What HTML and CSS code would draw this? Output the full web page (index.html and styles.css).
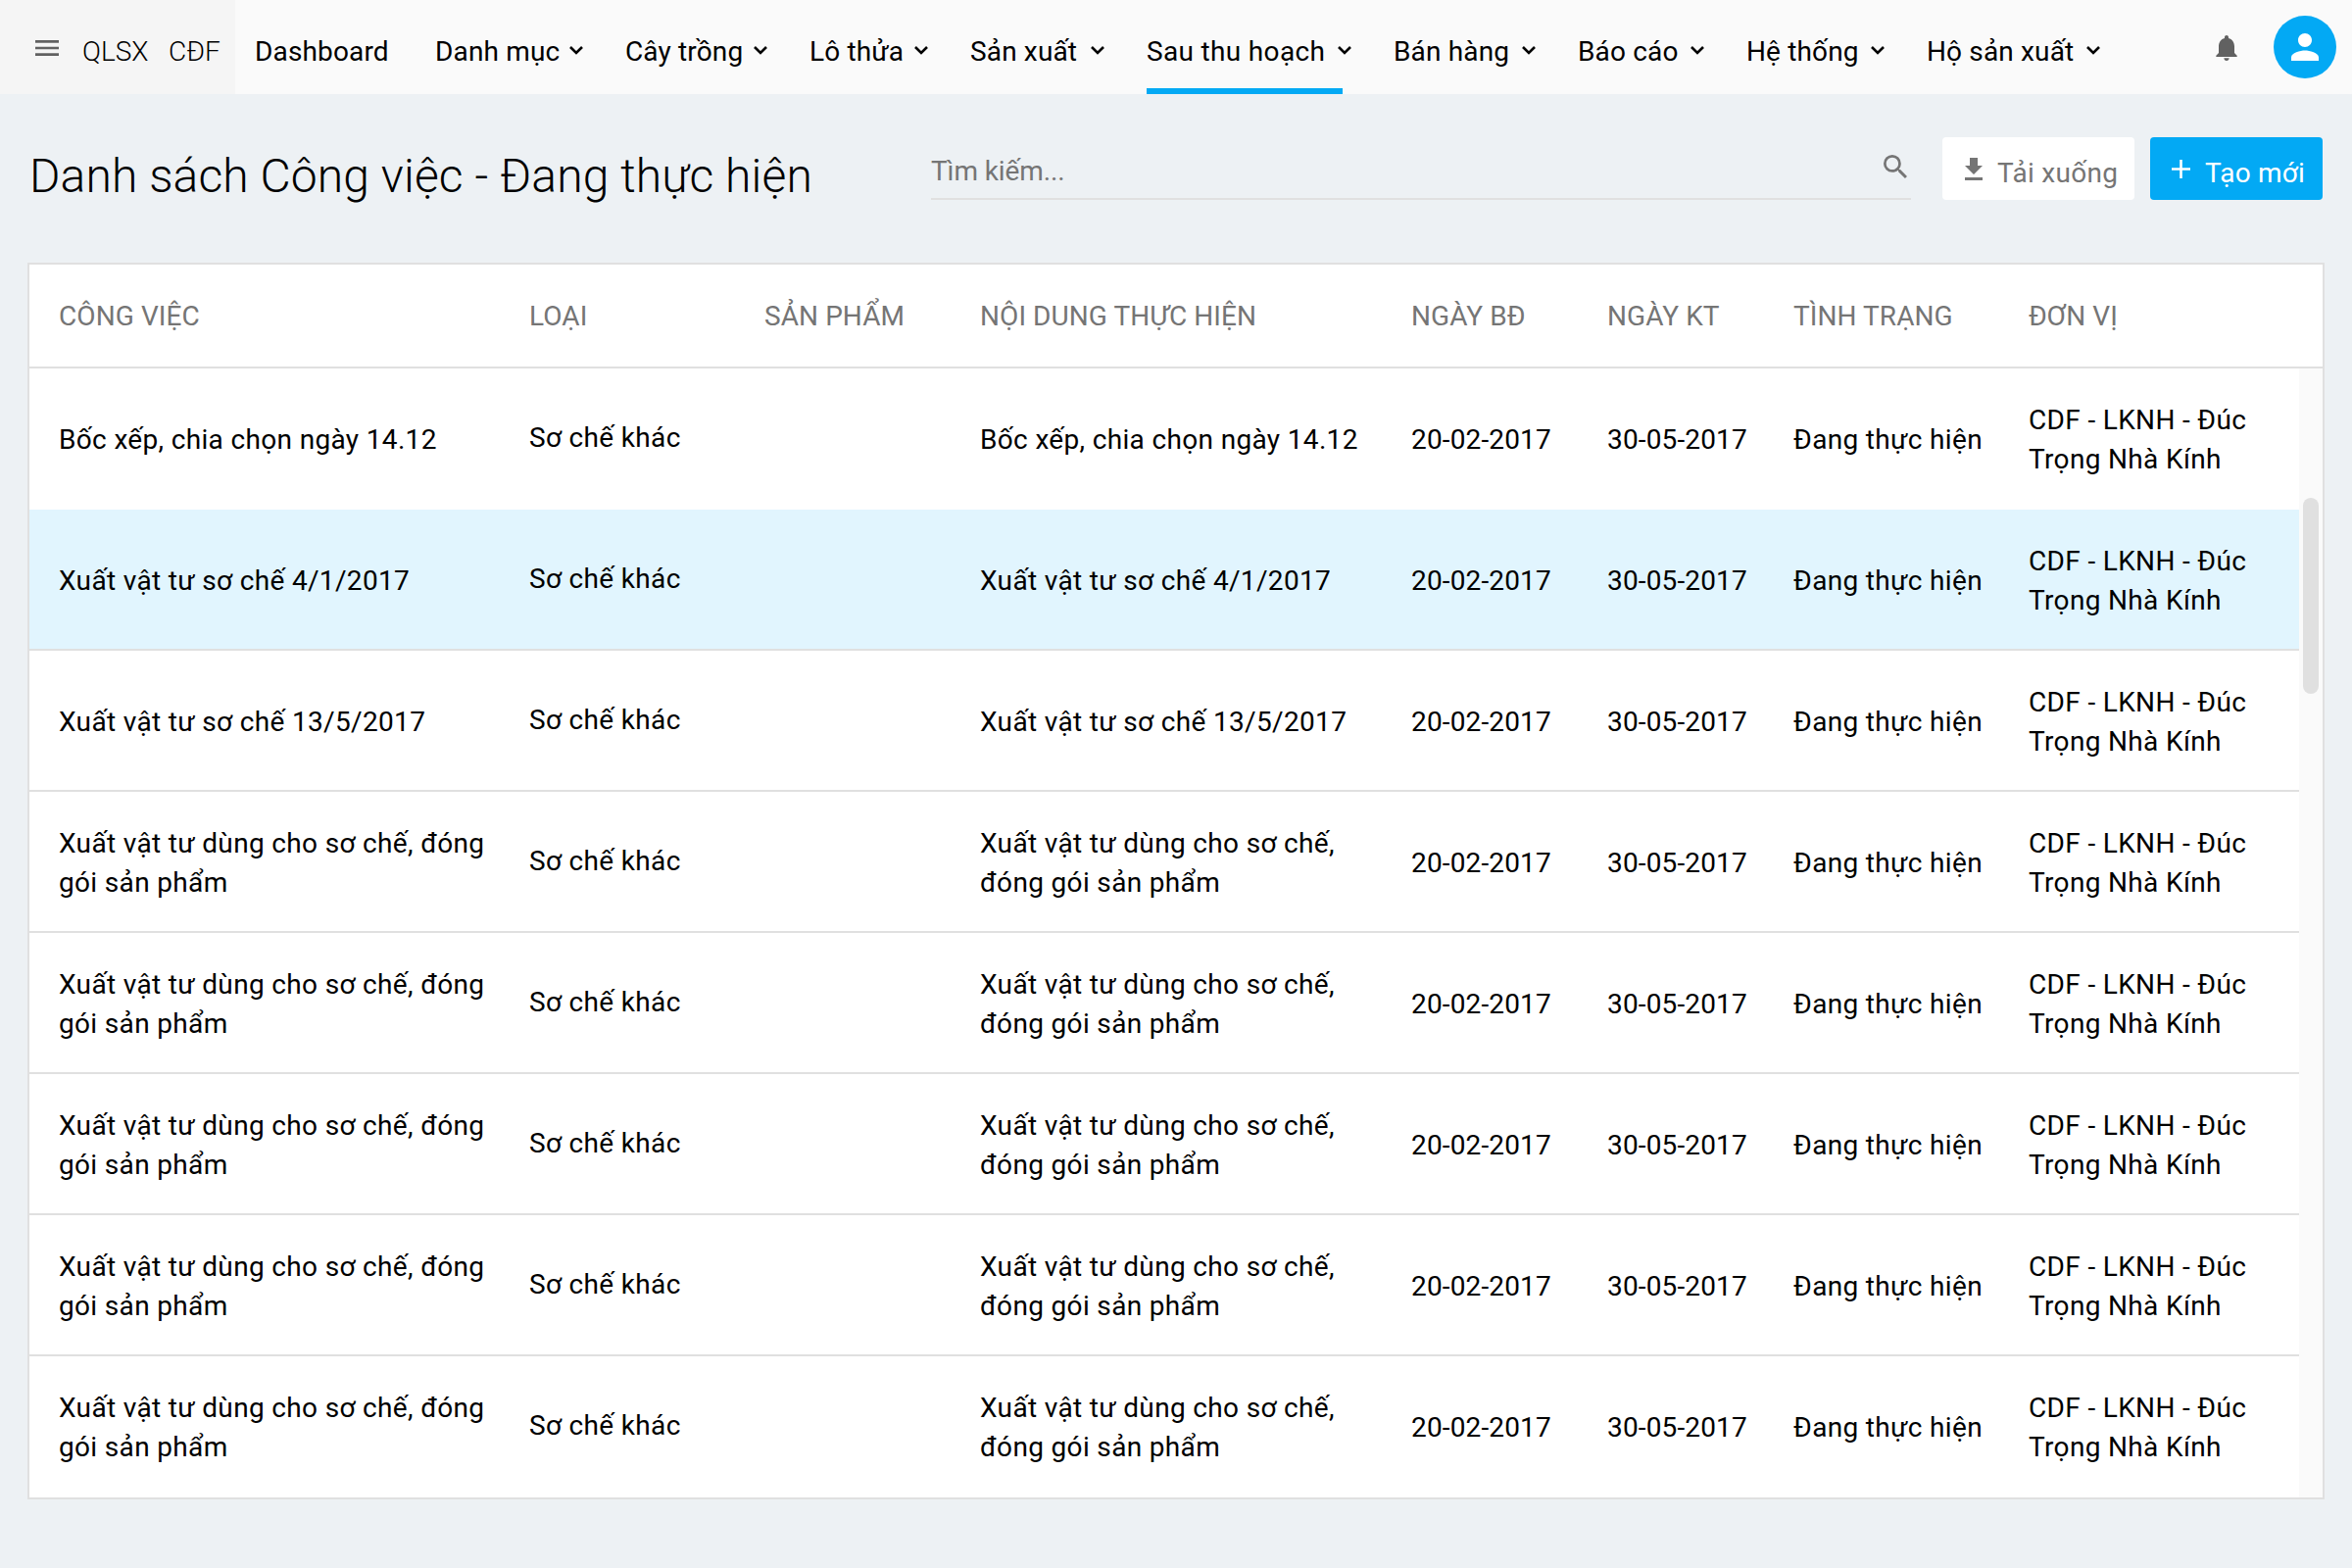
FILE: index.html
```html
<!DOCTYPE html>
<html lang="vi">
<head>
<meta charset="utf-8">
<title>Danh sách Công việc</title>
<link rel="stylesheet" href="styles.css">
</head>
<body>
<header class="navbar">
  <div class="brand">
    <svg class="brand-menu" viewBox="3 6 18 12"><path d="M3 18h18v-2H3v2zm0-5h18v-2H3v2zm0-7v2h18V6H3z"/></svg>
    <span class="brand-name">QLSX</span><span class="brand-org">CĐF</span>
  </div>
  <nav class="menu" id="menu"></nav>
  <div class="account">
    <svg class="bell" viewBox="4 2.5 16 19.5"><path d="M12 22c1.1 0 2-.9 2-2h-4c0 1.1.89 2 2 2zm6-6v-5c0-3.07-1.64-5.64-4.5-6.32V4c0-.83-.67-1.5-1.5-1.5s-1.5.67-1.5 1.5v.68C7.63 5.36 6 7.92 6 11v5l-2 2v1h16v-1l-2-2z"/></svg>
    <div class="avatar"><svg viewBox="4 4 16 16"><path d="M12 12c2.21 0 4-1.79 4-4s-1.790-4-4-4-4 1.790-4 4 1.790 4 4 4zm0 2c-2.670 0-8 1.340-8 4v2h16v-2c0-2.660-5.330-4-8-4z"/></svg></div>
  </div>
</header>
<main class="page">
  <div class="toolbar">
    <h1 class="title">Danh sách Công việc - Đang thực hiện</h1>
    <div class="search">
      <span class="search-hint">Tìm kiếm...</span>
      <svg class="search-icon" viewBox="3 3 17.500 17.500"><path d="M15.500 14h-.790l-.280-.270A6.471 6.471 0 0 0 16 9.500 6.500 6.500 0 1 0 9.500 16c1.610 0 3.090-.590 4.230-1.570l.270.280v.790l5 4.990L20.490 19l-4.990-5zm-6 0C7.010 14 5 11.990 5 9.500S7.010 5 9.500 5 14 7.010 14 9.500 11.990 14 9.500 14z"/></svg>
    </div>
    <div class="button button-plain">
      <svg class="icon-download" viewBox="0 0 18 23"><path d="M5 0h8v8h5l-9 9-9-9h5zM0 20h18v3H0z"/></svg>
      <span>Tải xuống</span>
    </div>
    <div class="button button-primary">
      <svg class="icon-plus" viewBox="0 0 19 19"><path d="M8.200 0h2.600v8.200H19v2.600h-8.200V19H8.200v-8.200H0V8.200h8.200z"/></svg>
      <span>Tạo mới</span>
    </div>
  </div>
  <section class="table">
    <div class="row head">
      <span>CÔNG VIỆC</span><span>LOẠI</span><span>SẢN PHẨM</span><span>NỘI DUNG THỰC HIỆN</span><span>NGÀY BĐ</span><span>NGÀY KT</span><span>TÌNH TRẠNG</span><span>ĐƠN VỊ</span>
    </div>
    <div class="body">
      <div class="rows" id="rows"></div>
      <div class="track"><div class="thumb"></div></div>
    </div>
  </section>
</main>
<script src="app.js"></script>
</body>
</html>
```

FILE: styles.css
```css
* { box-sizing: border-box; }
body {
  margin: 0;
  height: 1600px;
  background: #edf1f4;
  color: #000;
  font: 400 28px/40px Roboto, "Noto Sans", sans-serif;
  overflow: hidden;
}
svg { display: block; flex: none; }

.navbar { display: flex; height: 96px; background: #fafafa; }
.brand {
  display: flex;
  width: 240px;
  padding: 33px 0 0 36px;
  background: #f5f5f5;
  font-weight: 300;
}
.brand-menu { width: 24px; height: 16px; margin: 7.5px 24px 0 0; fill: #616161; }
.brand-name { width: 88px; }
.menu {
  display: grid;
  grid-template-columns: 184px 194px 188px 164px 180px 252px 188px 172px 184px 220px;
  margin-left: 20px;
  letter-spacing: 0.15px;
}
.menu-item {
  display: flex;
  justify-content: space-between;
  margin-right: 43px;
  padding-top: 33px;
  white-space: nowrap;
}
.menu-item.active { position: relative; letter-spacing: 0.33px; }
.menu-item.active::after {
  content: "";
  position: absolute;
  left: 0;
  bottom: 0;
  width: 200px;
  height: 6px;
  background: #03a9f4;
}
.chevron { width: 14px; height: 9px; margin-top: 14px; fill: none; stroke: #000; stroke-width: 2.6; }
.account { display: flex; margin-left: auto; padding-right: 16px; }
.bell { width: 22px; height: 26px; margin: 36px 37px 0 0; fill: #616161; }
.avatar {
  display: grid;
  place-items: center;
  width: 64px;
  height: 64px;
  margin-top: 16px;
  border-radius: 50%;
  background: #03a9f4;
}
.avatar svg { width: 28px; height: 28px; fill: #fff; }

.page { padding: 44px 28px 0; }
.toolbar { display: flex; height: 64px; padding-right: 2px; }
.title {
  width: 922px;
  margin: 8px 0 0;
  padding-left: 2px;
  font-size: 48px;
  font-weight: 300;
  line-height: 64px;
  letter-spacing: 0.1px;
}
.search {
  display: flex;
  justify-content: space-between;
  width: 1000px;
  margin-right: 32px;
  padding: 15px 4px 0 0;
  border-bottom: 2px solid #e0e0e0;
  color: #757575;
  letter-spacing: -0.1px;
}
.search-icon { width: 24px; height: 24px; margin-top: 3px; fill: #757575; }
.button {
  display: flex;
  padding: 17px 0 0;
  border-radius: 4px;
  white-space: nowrap;
}
.button-plain { width: 196px; margin-right: 16px; padding-left: 23px; background: #fff; color: #757575; letter-spacing: 0.3px; }
.button-primary { width: 176px; padding-left: 22px; background: #03a9f4; color: #fff; letter-spacing: 0.2px; }
.icon-download { width: 18px; height: 23px; margin: 4px 15px 0 0; fill: #757575; }
.icon-plus { width: 19px; height: 19px; margin: 6px 15px 0 0; fill: #fff; }

.table { margin-top: 64px; border: 2px solid #e0e0e0; background: #fff; }
.row {
  display: grid;
  grid-template-columns: 480px 240px 220px 440px 200px 190px 240px 1fr;
  align-items: center;
  height: 144px;
}
.row > span { padding: 2px 10px 0 30px; }
.row.head {
  height: 106px;
  border-bottom: 2px solid #e0e0e0;
  color: #757575;
  letter-spacing: 0.08px;
}
.rows { flex: 1; letter-spacing: 0.34px; }
.rows .row { box-shadow: inset 0 -2px #e0e0e0; }
.rows .row:first-child, .rows .row:last-child { box-shadow: none; }
.rows .row.selected { background: #e1f5fe; }
.rows .row > .kind { padding-bottom: 4px; }
.rows .row > .date { letter-spacing: 0.15px; }
.body { display: flex; }
.track { width: 24px; padding: 132px 4px 0; background: #fafafa; }
.thumb { height: 200px; border-radius: 8px; background: #e0e0e0; }
```

FILE: app.js
```js
const menu = ["Dashboard", "Danh mục", "Cây trồng", "Lô thửa", "Sản xuất",
  "Sau thu hoạch", "Bán hàng", "Báo cáo", "Hệ thống", "Hộ sản xuất"];
const chevron = '<svg class="chevron" viewBox="0 0 14 9"><path d="M1 1l6 6 6-6"/></svg>';
document.getElementById("menu").innerHTML = menu.map((label, i) =>
  `<div class="menu-item${label === "Sau thu hoạch" ? " active" : ""}"><span>${label}</span>${i ? chevron : ""}</div>`
).join("");

const supplies = "Xuất vật tư dùng cho sơ chế, đóng gói sản phẩm";
const jobs = ["Bốc xếp, chia chọn ngày 14.12", "Xuất vật tư sơ chế 4/1/2017",
  "Xuất vật tư sơ chế 13/5/2017", supplies, supplies, supplies, supplies, supplies];
document.getElementById("rows").innerHTML = jobs.map((job, i) =>
  `<div class="row${i === 1 ? " selected" : ""}"><span>${job}</span><span class="kind">Sơ chế khác</span><span></span>` +
  `<span>${job}</span><span class="date">20-02-2017</span><span class="date">30-05-2017</span><span>Đang thực hiện</span><span>CDF - LKNH - Đúc Trọng Nhà Kính</span></div>`
).join("");
```
